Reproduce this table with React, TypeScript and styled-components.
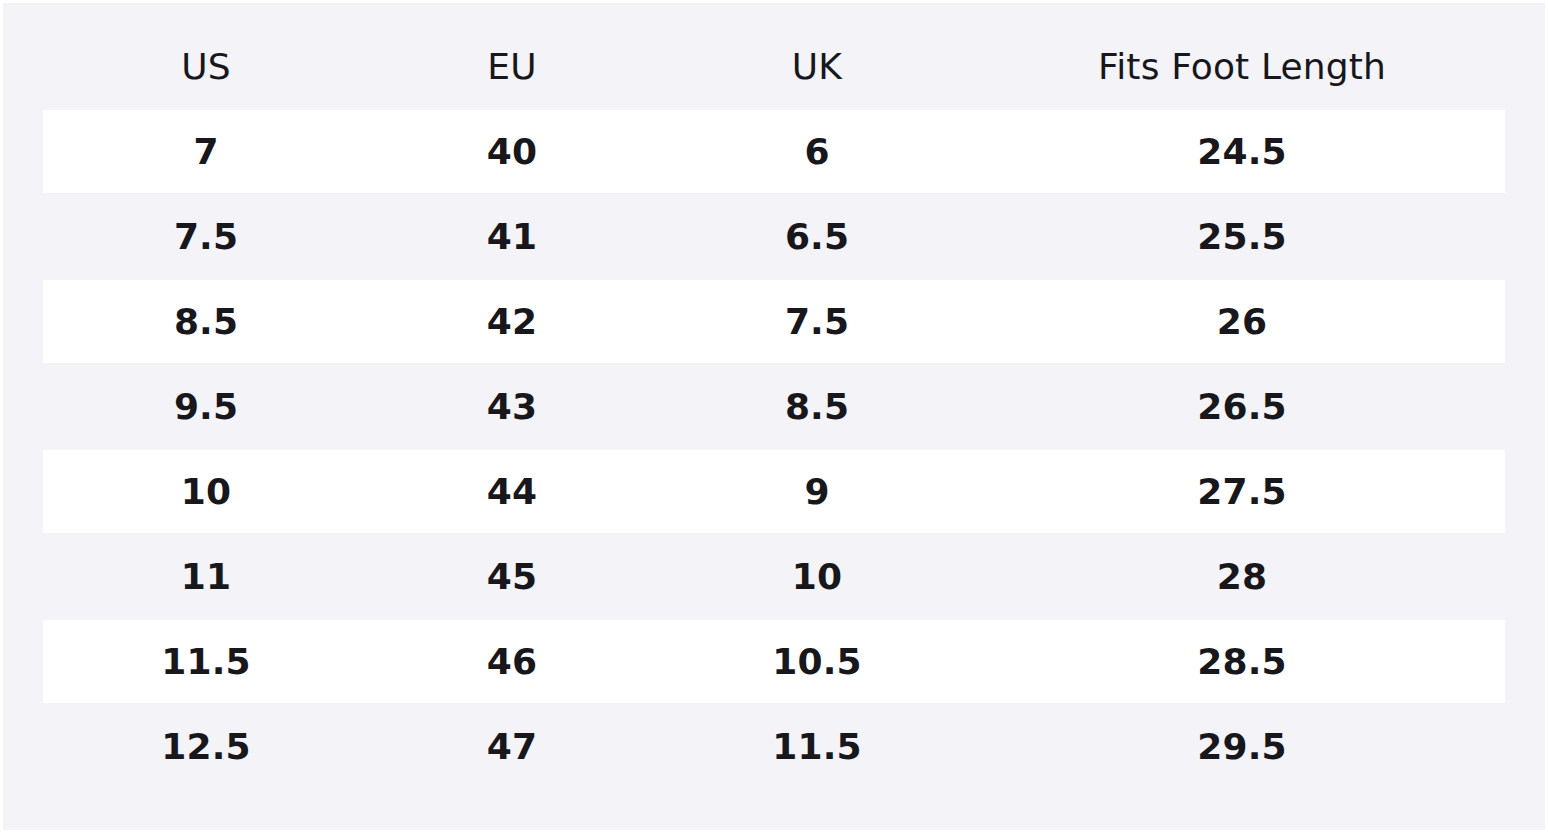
import React from "react";
import styled, { createGlobalStyle } from "styled-components";

const Global = createGlobalStyle`
  html, body { margin: 0; padding: 0; background: #ffffff; }
  body { padding: 3px; font-family: "DejaVu Sans", "Noto Sans", sans-serif; }
  * { box-sizing: border-box; }
`;

const Panel = styled.div`
  width: 1542px;
  height: 827px;
  background: #f3f3f8;
  padding: 22px 40px 40px 40px;
`;

const Table = styled.div`
  display: grid;
  grid-template-columns: 326px 286px 324px 526px;
  width: 1462px;
`;

const Row = styled.div<{ $shade: "header" | "white" | "gray" }>`
  display: contents;
  & > div {
    height: 85px;
    background: ${(p) => (p.$shade === "white" ? "#ffffff" : "#f3f3f8")};
    border-bottom: 2px solid ${(p) => (p.$shade === "white" ? "#f3f3f8" : "transparent")};
    font-weight: ${(p) => (p.$shade === "header" ? 400 : 700)};
  }
`;

const Cell = styled.div`
  display: flex;
  align-items: center;
  justify-content: center;
  font-size: 36px;
  color: #17171c;
  letter-spacing: 0.15px;
`;

const headers = ["US", "EU", "UK", "Fits Foot Length"];
const rows = [
  ["7", "40", "6", "24.5"],
  ["7.5", "41", "6.5", "25.5"],
  ["8.5", "42", "7.5", "26"],
  ["9.5", "43", "8.5", "26.5"],
  ["10", "44", "9", "27.5"],
  ["11", "45", "10", "28"],
  ["11.5", "46", "10.5", "28.5"],
  ["12.5", "47", "11.5", "29.5"],
];

export default function App() {
  return (
    <>
      <Global />
      <Panel>
        <Table>
          <Row $shade="header">
            {headers.map((h) => (
              <Cell key={h}>{h}</Cell>
            ))}
          </Row>
          {rows.map((r, i) => (
            <Row key={i} $shade={i % 2 === 0 ? "white" : "gray"}>
              {r.map((v, j) => (
                <Cell key={j}>{v}</Cell>
              ))}
            </Row>
          ))}
        </Table>
      </Panel>
    </>
  );
}
